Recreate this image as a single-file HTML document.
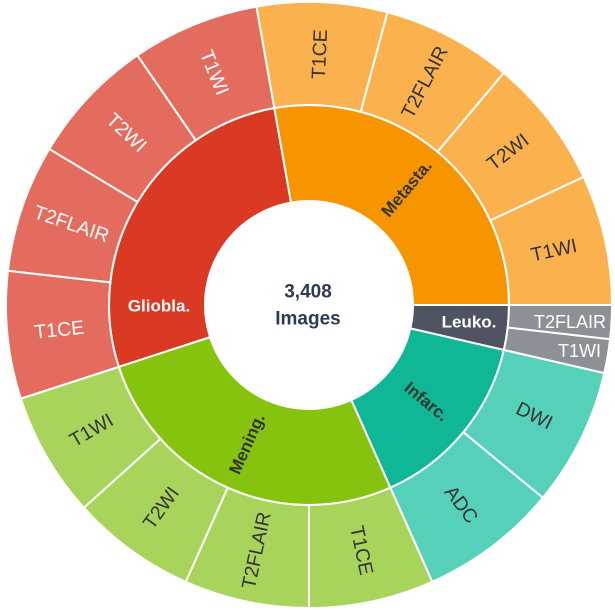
<!DOCTYPE html>
<html><head><meta charset="utf-8"><style>
html,body{margin:0;padding:0;background:#fff;width:615px;height:610px;overflow:hidden}
svg{display:block}
text{font-family:"Liberation Sans",Arial,sans-serif}
</style></head><body>
<svg id="s" width="615" height="610" viewBox="0 0 615 610"></svg>
<script>
var cx=309,cy=305,R0=104,R1=200,R2=303;
var svg=document.getElementById('s');var NS='http://www.w3.org/2000/svg';
function pt(r,a){var t=a*Math.PI/180;return [cx+r*Math.sin(t),cy-r*Math.cos(t)];}
function arc(r0,r1,a0,a1,fill){
 var p1=pt(r1,a0),p2=pt(r1,a1),p3=pt(r0,a1),p4=pt(r0,a0);var lg=(a1-a0)>180?1:0;
 var d='M'+p1+' A'+r1+' '+r1+' 0 '+lg+' 1 '+p2+' L'+p3+' A'+r0+' '+r0+' 0 '+lg+' 0 '+p4+'Z';
 var e=document.createElementNS(NS,'path');e.setAttribute('d',d);e.setAttribute('fill',fill);
 e.setAttribute('stroke','#fff');e.setAttribute('stroke-width','2');svg.appendChild(e);}
function txt(s,x,y,rot,col,size,bold,anchor){
 var e=document.createElementNS(NS,'text');e.textContent=s;e.setAttribute('x',x);e.setAttribute('y',y);
 e.setAttribute('text-anchor',anchor||'middle');e.setAttribute('dominant-baseline','central');
 e.setAttribute('fill',col);e.setAttribute('font-size',size);if(bold)e.setAttribute('font-weight','bold');
 e.setAttribute('transform','rotate('+rot+' '+x+' '+y+')');svg.appendChild(e);}
function rot(a){return a<180?a-90:a-270;}
var groups=[
 {n:'Metasta.',a0:-10,a1:90,ci:'#f79500',co:'#fbb24e',ti:'#333',to:'#333',subs:['T1CE','T2FLAIR','T2WI','T1WI']},
 {n:'Leuko.',a0:90,a1:103,ci:'#4e5462',co:'#8d9097',ti:'#fff',to:'#fff',subs:['T2FLAIR','T1WI'],fix:[469,322,0]},
 {n:'Infarc.',a0:103,a1:156,ci:'#0fb797',co:'#55d1b9',ti:'#333',to:'#333',subs:['DWI','ADC']},
 {n:'Mening.',a0:156,a1:252,ci:'#86c30f',co:'#a8d45c',ti:'#333',to:'#333',subs:['T1CE','T2FLAIR','T2WI','T1WI']},
 {n:'Gliobla.',a0:252,a1:350,ci:'#da3a23',co:'#e46c5f',ti:'#fff',to:'#fff',subs:['T1CE','T2FLAIR','T2WI','T1WI'],fix:[159,306,0]}
];
groups.forEach(function(g){
 arc(R0,R1,g.a0,g.a1,g.ci);
 var n=g.subs.length,w=(g.a1-g.a0)/n;
 for(var i=0;i<n;i++){arc(R1,R2,g.a0+i*w,g.a0+(i+1)*w,g.co);}
});
groups.forEach(function(g){
 var n=g.subs.length,w=(g.a1-g.a0)/n;
 if(g.n=='Leuko.'){txt('T2FLAIR',606,322,0,'#fff',18,false,'end');txt('T1WI',601,351,0,'#fff',18,false,'end');}
 else for(var i=0;i<n;i++){var a=g.a0+(i+.5)*w;var p=pt(251,a);
  txt(g.subs[i],p[0],p[1],rot((a+360)%360),g.to,19.5,false);}
 if(g.fix){txt(g.n,g.fix[0],g.fix[1],g.fix[2],g.ti,17,true);}
 else{var a=(g.a0+g.a1)/2;var p=pt(152,a);txt(g.n,p[0],p[1],rot((a+360)%360),g.ti,17,true);}
});
var c=document.createElementNS(NS,'circle');c.setAttribute('cx',cx);c.setAttribute('cy',cy);c.setAttribute('r',R0);c.setAttribute('fill','#fff');svg.appendChild(c);
txt('3,408',308,292,0,'#2e3a55',19,true);txt('Images',308,319,0,'#2e3a55',19,true);
</script>
</body></html>
